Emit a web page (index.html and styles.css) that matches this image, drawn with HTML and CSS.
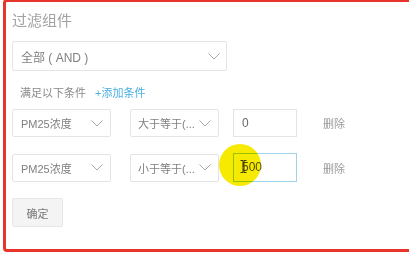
FILE: index.html
```html
<!DOCTYPE html>
<html lang="zh">
  <head>
    <meta charset="UTF-8" />
    <meta name="viewport" content="width=device-width, initial-scale=1.0" />
    <title>过滤组件</title>
    <link rel="stylesheet" href="styles.css">
  </head>
  <body>
    <div class="frame">
      <div id="panel">
        <h2 class="title">过滤组件</h2>

        <div class="select select-mode">
          <span>全部 ( AND )</span>
          <svg class="chevron" width="12" height="7" viewBox="0 0 12 7"><polyline points="0.5,0.5 6,6 11.5,0.5" /></svg>
        </div>

        <div class="cond-head">
          <span>满足以下条件</span>
          <a class="add">+添加条件</a>
        </div>

        <div class="row">
          <div class="select select-field">
            <span>PM25浓度</span>
            <svg class="chevron" width="12" height="7" viewBox="0 0 12 7"><polyline points="0.5,0.5 6,6 11.5,0.5" /></svg>
          </div>
          <div class="select select-op">
            <span>大于等于(...</span>
            <svg class="chevron" width="12" height="7" viewBox="0 0 12 7"><polyline points="0.5,0.5 6,6 11.5,0.5" /></svg>
          </div>
          <div class="input">0</div>
          <span class="del">删除</span>
        </div>

        <div class="row">
          <div class="select select-field">
            <span>PM25浓度</span>
            <svg class="chevron" width="12" height="7" viewBox="0 0 12 7"><polyline points="0.5,0.5 6,6 11.5,0.5" /></svg>
          </div>
          <div class="select select-op">
            <span>小于等于(...</span>
            <svg class="chevron" width="12" height="7" viewBox="0 0 12 7"><polyline points="0.5,0.5 6,6 11.5,0.5" /></svg>
          </div>
          <div class="input focused">500</div>
          <span class="del">删除</span>
        </div>

        <button class="ok">确定</button>
      </div>
    </div>

    <!-- mouse highlight from the screen recording -->
    <div class="spot"></div>
    <svg class="ibeam" width="7" height="13" viewBox="0 0 7 13">
      <path d="M0.5 0.5h2.5v12h-2.5M6.5 0.5h-2.5v12h2.5" />
    </svg>
  </body>
</html>
```

FILE: styles.css
```css
body {
  margin: 0;
  background-color: white;
  font-family: "Liberation Sans", "Noto Sans CJK SC", sans-serif;
  overflow: hidden;
}

.frame {
  width: 100%;
  height: 257px;
  overflow: hidden;
}

#panel {
  box-sizing: border-box;
  width: 440px;
  height: 253px;
  margin: -1px 0 0 3px;
  padding: 8px 6px;
  border: 3px solid #e8352b;
  border-radius: 4px;
}

.title {
  margin: 0;
  font-size: 15px;
  line-height: 22px;
  font-weight: normal;
  color: #a2a2a2;
}

.select {
  box-sizing: border-box;
  display: flex;
  align-items: center;
  justify-content: space-between;
  border: 1px solid #e4e4e4;
  border-radius: 2px;
  padding: 0 7px 0 8px;
  font-size: 11px;
  color: #808080;
  background: white;
}

.chevron polyline {
  fill: none;
  stroke: #a8a8a8;
  stroke-width: 1;
}

.select-mode {
  width: 215px;
  height: 30px;
  margin-top: 9px;
  font-size: 12px;
  padding-right: 6px;
}

.cond-head {
  margin-top: 14px;
  font-size: 11px;
  line-height: 16px;
  color: #8a8a8a;
  padding-left: 8px;
}

.add {
  margin-left: 6px;
  color: #4ab0e0;
}

.row {
  display: flex;
  align-items: center;
  margin-top: 8px;
}

.row + .row {
  margin-top: 16px;
}

.select-field {
  width: 99px;
  height: 28px;
}

.select-op {
  width: 89px;
  height: 28px;
  margin-left: 19px;
  padding-left: 7px;
}

.input {
  box-sizing: border-box;
  width: 64px;
  height: 28px;
  margin-left: 14px;
  padding-left: 8px;
  border: 1px solid #e4e4e4;
  font-size: 12px;
  line-height: 26px;
  color: #666;
}

.input.focused {
  height: 29px;
  border-color: #9ed2ea;
  color: #555;
}

.del {
  margin-left: 26px;
  font-size: 11px;
  color: #9a9a9a;
}

.ok {
  display: block;
  width: 51px;
  height: 29px;
  margin-top: 16px;
  padding: 0;
  border: 1px solid #e6e6e6;
  border-radius: 2px;
  background-color: #f4f4f4;
  font-family: inherit;
  font-size: 11px;
  color: #777;
}

.spot {
  position: absolute;
  left: 219px;
  top: 144px;
  width: 42px;
  height: 42px;
  border-radius: 50%;
  background: radial-gradient(circle, #f6ea00 0%, #f6ea00 82%, rgba(246, 234, 0, 0.5) 100%);
  mix-blend-mode: multiply;
}

.ibeam {
  position: absolute;
  left: 240px;
  top: 160px;
}

.ibeam path {
  fill: none;
  stroke: #3a3a20;
  stroke-width: 1;
}
```
